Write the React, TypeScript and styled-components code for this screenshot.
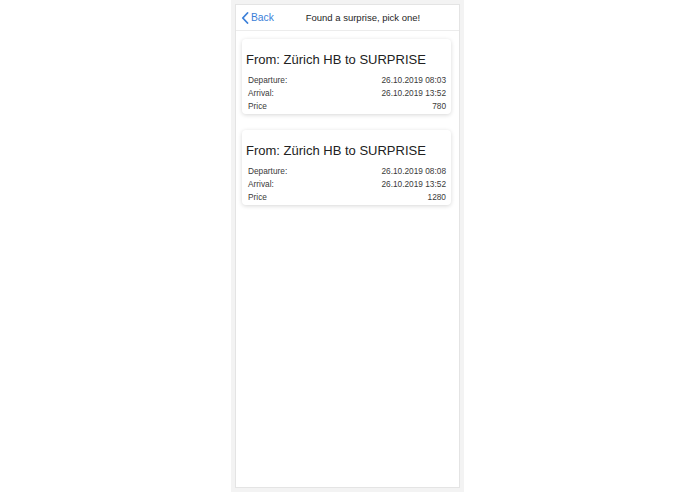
import React from "react";
import styled, { createGlobalStyle } from "styled-components";

const Global = createGlobalStyle`
  html, body { margin: 0; padding: 0; background: #ffffff; }
  body { font-family: "Liberation Sans", Arial, sans-serif; }
`;

const Frame = styled.div`
  width: 225px;
  margin: 0 auto;
  padding: 4px;
  background: #f3f3f3;
`;

const Screen = styled.div`
  height: 482px;
  background: #ffffff;
  border: 1px solid #e4e4e4;
  display: flex;
  flex-direction: column;
`;

const Header = styled.div`
  height: 25px;
  display: flex;
  align-items: center;
  padding: 0 7px 0 5px;
  border-bottom: 1px solid #ececec;
`;

const BackButton = styled.button`
  display: flex;
  align-items: center;
  gap: 2px;
  border: 0;
  background: none;
  padding: 0;
  color: #3b7fd9;
  font-family: inherit;
  font-size: 10.3px;
  cursor: pointer;
`;

const Title = styled.div`
  flex: 1;
  text-align: center;
  font-size: 9.5px;
  color: #1e1e1e;
`;

const List = styled.div`
  display: flex;
  flex-direction: column;
  gap: 16px;
  padding: 8px 8px 0 6px;
`;

const Card = styled.div`
  border-radius: 4px;
  background: #ffffff;
  box-shadow: 0 1px 4px rgba(0, 0, 0, 0.16);
  padding: 13px 5px 1px 4px;
`;

const CardTitle = styled.div`
  font-size: 13px;
  line-height: 16px;
  color: #222222;
  margin-bottom: 6px;
`;

const Row = styled.div`
  display: flex;
  justify-content: space-between;
  padding-left: 2px;
  font-size: 8.3px;
  line-height: 13px;
  color: #3a3a3a;
`;

type Trip = { departure: string; arrival: string; price: string };

const trips: Trip[] = [
  { departure: "26.10.2019 08:03", arrival: "26.10.2019 13:52", price: "780" },
  { departure: "26.10.2019 08:08", arrival: "26.10.2019 13:52", price: "1280" },
];

const Chevron = () => (
  <svg width="8" height="12" viewBox="0 0 8 12">
    <path d="M6.5 1 L1.8 6 L6.5 11" fill="none" stroke="#3b7fd9" strokeWidth="1.8" strokeLinecap="round" strokeLinejoin="round" />
  </svg>
);

export default function App() {
  return (
    <>
      <Global />
      <Frame>
        <Screen>
          <Header>
            <BackButton>
              <Chevron />
              Back
            </BackButton>
            <Title>Found a surprise, pick one!</Title>
          </Header>
          <List>
            {trips.map((t, i) => (
              <Card key={i}>
                <CardTitle>From: Zürich HB to SURPRISE</CardTitle>
                <Row><span>Departure:</span><span>{t.departure}</span></Row>
                <Row><span>Arrival:</span><span>{t.arrival}</span></Row>
                <Row><span>Price</span><span>{t.price}</span></Row>
              </Card>
            ))}
          </List>
        </Screen>
      </Frame>
    </>
  );
}
